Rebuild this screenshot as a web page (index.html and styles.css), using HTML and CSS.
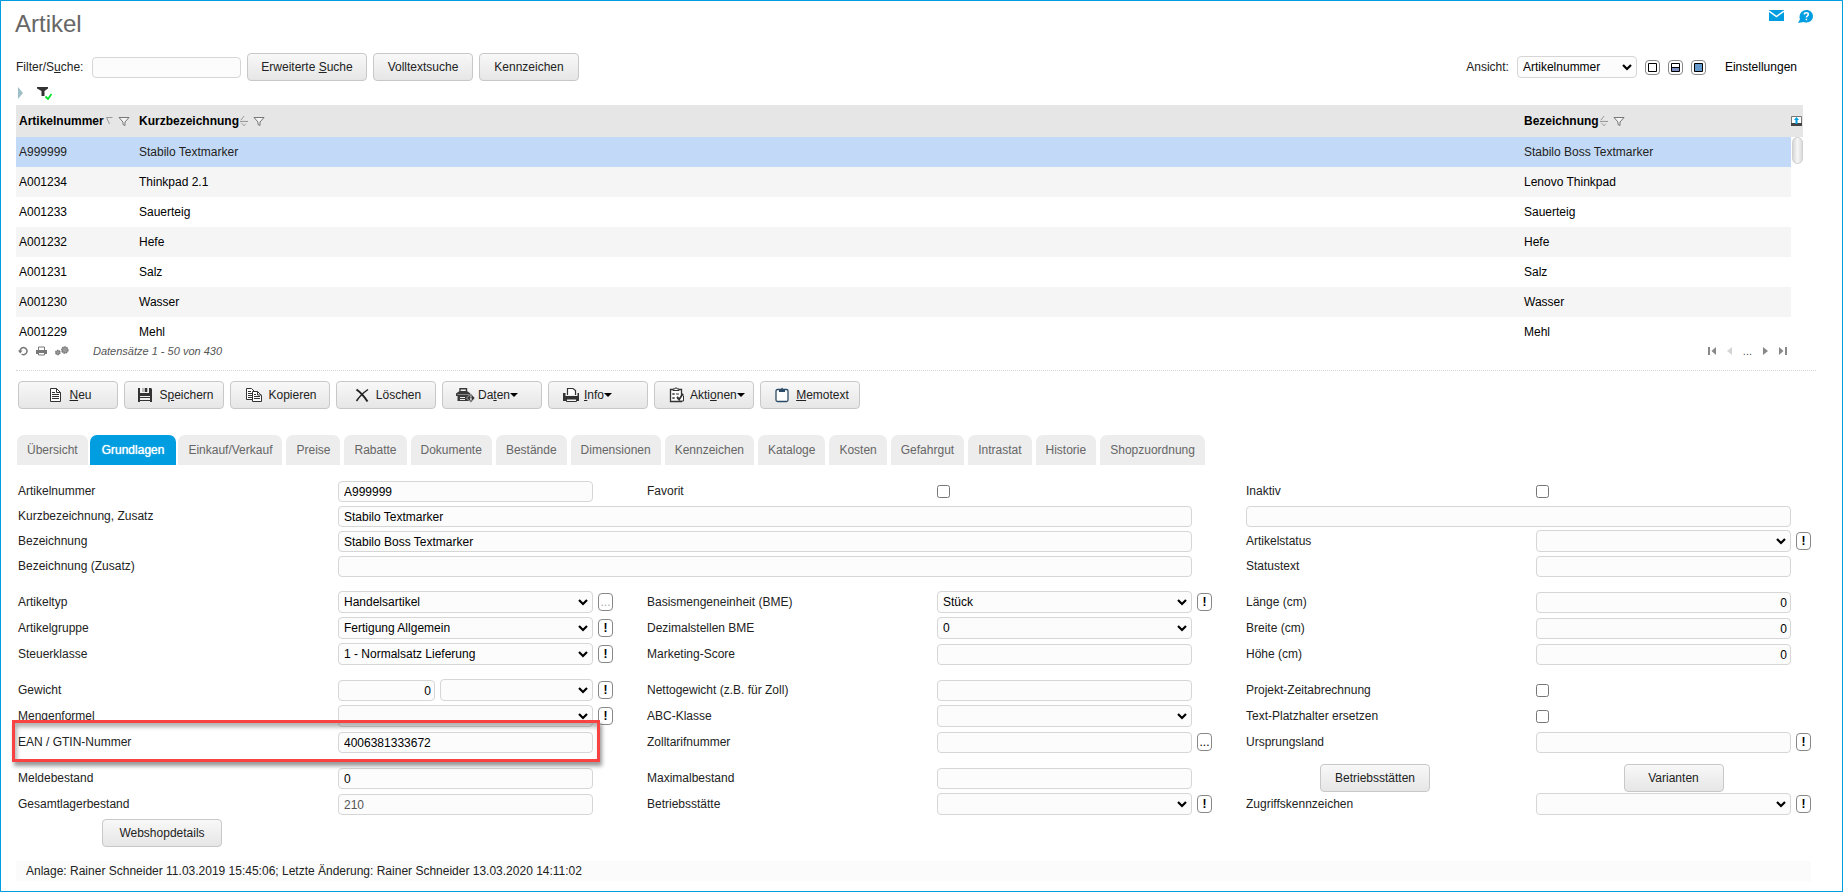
FILE: index.html
```html
<!DOCTYPE html>
<html lang="de">
<head>
<meta charset="utf-8">
<title>Artikel</title>
<link rel="stylesheet" href="styles.css">
</head>
<body>
<svg class="defs" aria-hidden="true">
  <symbol id="funnel" viewBox="0 0 12 11"><path d="M1 1.500h10L7 6v3.500L5 8.500V6z" fill="#f4f4f4" stroke="#777" /></symbol>
  <symbol id="sort" viewBox="0 0 9 12"><path d="M0 6.500h9M1 5l3.500-4.500" stroke="#888" fill="none"/><path d="M1.500 8l3 3.500L6.500 9" stroke="#999" fill="none"/></symbol>
</svg>
<header class="top">
  <h1>Artikel</h1>
  <div class="top-icons">
    <svg width="15" height="11" viewBox="0 0 15 11"><path d="M0 0h15v11H0z" fill="#009ee0"/><path d="M0 1l7.500 5.500L15 1" fill="none" stroke="#fff" stroke-width="1.500"/></svg>
    <svg width="15" height="13" viewBox="0 0 15 13"><path d="M8.500 0C12 0 15 2.700 15 6.300s-3 6.200-6.500 6.200c-1 0-2-.2-2.800-.6L0 13l1.900-3.500C.4 4 4 0 8.500 0z" fill="#009ee0"/><path d="M6.300 4.500c0-2.200 4-2.200 4 0 0 1.400-1.900 1.300-1.900 3M8.400 8.700v1.600" fill="none" stroke="#fff" stroke-width="1.500"/></svg>
  </div>
</header>

<div class="filterbar">
  <label class="search-label" for="suche">Filter/S<u>u</u>che:</label>
  <input id="suche" class="field search" type="text">
  <button class="btn wide"><span>Erweiterte <u>S</u>uche</span></button>
  <button class="btn">Volltextsuche</button>
  <button class="btn">Kennzeichen</button>
  <div class="view">
    <label for="ansicht">Ansicht:</label>
    <select id="ansicht" class="field view-select"><option>Artikelnummer</option></select>
    <div class="view-modes">
      <button class="mode" aria-label="Liste"><svg width="9" height="9"><path d="M.5.500h8v8h-8z" fill="#fff" stroke="#000"/></svg></button>
      <button class="mode" aria-label="Geteilt"><svg width="9" height="9"><path d="M.5.500h8v8h-8z" fill="#fff" stroke="#000"/><path d="M1 5h7v3H1z" fill="#7b8fc0"/><path d="M0 4.500h9" stroke="#000"/></svg></button>
      <button class="mode" aria-label="Detail"><svg width="9" height="9"><path d="M.5.500h8v8h-8z" fill="#6699cc" stroke="#000"/></svg></button>
    </div>
    <a class="settings" href="#">Einstellungen</a>
  </div>
</div>

<div class="filter-state">
  <svg width="5" height="12" viewBox="0 0 5 12"><path d="M0 0l5 6-5 6z" fill="#9fbfc6"/></svg>
  <svg width="15" height="14" viewBox="0 0 15 14"><path d="M0 1h11v1.500L7.500 5v5h-3V5L0 2.500z" fill="#333"/><path d="M8.500 10.500l2.500 2.500 3.500-5" fill="none" stroke="#00e62e" stroke-width="1.800"/></svg>
</div>

<table class="list">
  <colgroup><col class="c-nr"><col><col class="c-bez"><col class="c-bar"></colgroup>
  <thead>
    <tr>
      <th><span class="th">Artikelnummer<svg class="sorted" width="7" height="8" viewBox="0 0 7 8"><path d="M6.500.500h-6L3.500 7" fill="none" stroke="#999"/></svg><svg class="funnel" width="12" height="11"><use href="#funnel"/></svg></span></th>
      <th><span class="th">Kurzbezeichnung<svg width="8" height="12"><use href="#sort"/></svg><svg class="funnel" width="12" height="11"><use href="#funnel"/></svg></span></th>
      <th><span class="th">Bezeichnung<svg width="8" height="12"><use href="#sort"/></svg><svg class="funnel" width="12" height="11"><use href="#funnel"/></svg></span></th>
      <th class="bar"><svg width="11" height="10" viewBox="0 0 11 10"><path d="M.5.500h10v9H.5z" fill="#fff" stroke="#777"/><path d="M0 7h11v3H0z" fill="#444"/><path d="M5.500 1L8 4H6.500v4h-2V4H3z" fill="#009ee0"/></svg></th>
    </tr>
  </thead>
  <tbody>
    <tr class="selected"><td>A999999</td><td>Stabilo Textmarker</td><td>Stabilo Boss Textmarker</td><td class="bar" rowspan="7"><div class="thumb"></div></td></tr>
    <tr><td>A001234</td><td>Thinkpad 2.1</td><td>Lenovo Thinkpad</td></tr>
    <tr><td>A001233</td><td>Sauerteig</td><td>Sauerteig</td></tr>
    <tr><td>A001232</td><td>Hefe</td><td>Hefe</td></tr>
    <tr><td>A001231</td><td>Salz</td><td>Salz</td></tr>
    <tr><td>A001230</td><td>Wasser</td><td>Wasser</td></tr>
    <tr><td>A001229</td><td>Mehl</td><td>Mehl</td></tr>
  </tbody>
</table>

<div class="status">
  <div class="status-icons">
    <svg width="10" height="10" viewBox="0 0 10 10"><path d="M2 5a3.500 3.500 0 1 1 1.500 3" fill="none" stroke="#777" stroke-width="1.500"/><path d="M0 4.500h4.500L2.200 7.500z" fill="#777"/></svg>
    <svg width="11" height="10" viewBox="0 0 11 10"><path d="M2.500 4V1h6v3" fill="#fff" stroke="#777"/><path d="M0 4h11v4H0z" fill="#777"/><path d="M2.500 6.500h6v2.500h-6z" fill="#fff" stroke="#777"/></svg>
    <svg width="14" height="10" viewBox="0 0 14 10"><circle cx="2.800" cy="6.500" r="2.100" fill="#999" stroke="#777" stroke-width="1.500" stroke-dasharray="1.500 .5"/><circle cx="9.800" cy="4" r="3" fill="#999" stroke="#777" stroke-width="1.600" stroke-dasharray="1.600 .6"/></svg>
  </div>
  <span class="count">Datensätze 1 - 50 von 430</span>
  <div class="pager">
    <svg width="8" height="8" viewBox="0 0 8 8"><path d="M0 0h2v8H0zM8 0v8L3.500 4z" fill="#888"/></svg>
    <svg width="5" height="8" viewBox="0 0 5 8"><path d="M5 0v8L0 4z" fill="#d4d4d4"/></svg>
    <span>...</span>
    <svg width="5" height="8" viewBox="0 0 5 8"><path d="M0 0v8l5-4z" fill="#888"/></svg>
    <svg width="8" height="8" viewBox="0 0 8 8"><path d="M6 0h2v8H6zM0 0v8l4.500-4z" fill="#888"/></svg>
  </div>
</div>

<div class="toolbar">
  <button class="btn"><svg width="16" height="16" viewBox="0 0 16 16"><path d="M3.500 1.500h6l4 4v9h-10z" fill="#fff" stroke="#333"/><path d="M9.500 1.500v4h4M5 5.500h3M5 7.500h7M5 9.500h7M5 11.500h7" fill="none" stroke="#333"/></svg><span><u>N</u>eu</span></button>
  <button class="btn"><svg width="16" height="16" viewBox="0 0 16 16"><path d="M1 1h2v5h9V1h2l1 1v13H1z" fill="#333"/><path d="M5 1h6v4H5z" fill="#bbb"/><path d="M8 1h2v4H8z" fill="#333"/><path d="M3 9h10v6H3z" fill="#eee"/><path d="M3 10.500h10M3 13.500h10" stroke="#333"/></svg><span>S<u>p</u>eichern</span></button>
  <button class="btn"><svg width="16" height="16" viewBox="0 0 16 16"><path d="M.5 1.500h5l3 3v8h-8z" fill="#fff" stroke="#333"/><path d="M2 4.500h3M2 6.500h4M2 8.500h4M2 10.500h4" stroke="#333"/><path d="M6.500 4.500h5l4 4v6h-9z" fill="#fff" stroke="#333"/><path d="M11.500 4.500v3.500h4M8 7.500h2M8 9.500h6M8 11.500h6" fill="none" stroke="#333"/></svg><span>Kopieren</span></button>
  <button class="btn"><svg width="16" height="16" viewBox="0 0 16 16"><path d="M2.500 2.500C6 5 10 9 13.500 14.500" fill="none" stroke="#222" stroke-width="2"/><path d="M14 2.500C9 6 5 10 2.500 14" fill="none" stroke="#222" stroke-width="1.500"/></svg><span>Löschen</span></button>
  <button class="btn menu"><svg width="19" height="16" viewBox="0 0 19 16"><path d="M0 6.500L3.500 4h7.500l3.500 2.500V9h-1.500v5H1.500V9H0z" fill="#3a3a3a"/><path d="M4 4V1.700h6.500V4" fill="none" stroke="#3a3a3a" stroke-width="1.400"/><path d="M1.500 7.500h11.500" stroke="#999" stroke-width=".8"/><path d="M4 10.500h5M4 12.500h5" stroke="#e8e8e8"/><path d="M15 6.700l4 4.300-4 4.500-4.500-4.500z" fill="#3a3a3a" stroke="#eee" stroke-width=".6"/><path d="M14.900 8.500v1.200M14.900 10.500v3" stroke="#fff" stroke-width="1.300"/></svg><span>Da<u>t</u>en</span><i class="caret"></i></button>
  <button class="btn menu"><svg width="19" height="16" viewBox="0 0 19 16"><path d="M5.500 8V1.500h5.500l2.500 2V8" fill="#fff" stroke="#333" stroke-width="1.200"/><path d="M1 6h2.500v3h12V6H17v8h-2.500v-2h-10v2H1z" fill="#333"/><path d="M4.500 12h10v2.500h-10z" fill="#f4f4f4" stroke="#333"/></svg><span><u>I</u>nfo</span><i class="caret"></i></button>
  <button class="btn menu"><svg width="19" height="16" viewBox="0 0 19 16"><path d="M2.500 2.500h11v12h-11z" fill="#fff" stroke="#333" stroke-width="1.300"/><path d="M5 3.500V2h1.800l1.200-1.500L9.200 2H11v1.500z" fill="#fff" stroke="#333"/><path d="M4.500 6l2 2M6.500 6l-2 2M8 7h3M4.500 10l2 2M6.500 10l-2 2" fill="none" stroke="#333"/><path d="M15.500 8.500v5.500h-4l-2.500-3" fill="#fff" stroke="#333"/><path d="M9 9.800l2.300 2.400L15 6.800" fill="none" stroke="#333" stroke-width="1.800"/></svg><span>Akti<u>o</u>nen</span><i class="caret"></i></button>
  <button class="btn"><svg width="16" height="16" viewBox="0 0 16 16"><rect x="2" y="2.500" width="12" height="12" rx="1.500" fill="#fff" stroke="#2b4a66" stroke-width="1.300"/><path d="M5 2h2l1-1.500L9 2h2v3H5z" fill="#2b4a66"/></svg><span><u>M</u>emotext</span></button>
</div>

<nav class="tabs">
  <a href="#">Übersicht</a><a href="#" class="active">Grundlagen</a><a href="#">Einkauf/Verkauf</a><a href="#">Preise</a><a href="#">Rabatte</a><a href="#">Dokumente</a><a href="#">Bestände</a><a href="#">Dimensionen</a><a href="#">Kennzeichen</a><a href="#">Kataloge</a><a href="#">Kosten</a><a href="#">Gefahrgut</a><a href="#">Intrastat</a><a href="#">Historie</a><a href="#">Shopzuordnung</a>
</nav>

<form class="form">
  <div class="group tight">
    <label class="l1" for="nr">Artikelnummer</label><input class="field f1" id="nr" value="A999999">
    <label class="l2" for="fav">Favorit</label><input class="f2" type="checkbox" id="fav">
    <label class="l3" for="inaktiv">Inaktiv</label><input class="f3" type="checkbox" id="inaktiv">

    <label class="l1" for="kurz">Kurzbezeichnung, Zusatz</label><input class="field long" id="kurz" value="Stabilo Textmarker">
    <input class="field extra" aria-label="Zusatz">

    <label class="l1" for="bez">Bezeichnung</label><input class="field long" id="bez" value="Stabilo Boss Textmarker">
    <label class="l3" for="status">Artikelstatus</label><select class="field f3" id="status"><option></option></select><button type="button" class="side s3">!</button>

    <label class="l1" for="bez2">Bezeichnung (Zusatz)</label><input class="field long" id="bez2">
    <label class="l3" for="stext">Statustext</label><input class="field f3" id="stext">
  </div>

  <div class="group">
    <label class="l1" for="typ">Artikeltyp</label><select class="field f1" id="typ"><option>Handelsartikel</option></select><button type="button" class="side s1 dots" disabled>...</button>
    <label class="l2" for="bme">Basismengeneinheit (BME)</label><select class="field f2" id="bme"><option>Stück</option></select><button type="button" class="side s2">!</button>
    <label class="l3" for="laenge">Länge (cm)</label><input class="field f3 num" id="laenge" value="0">

    <label class="l1" for="gruppe">Artikelgruppe</label><select class="field f1" id="gruppe"><option>Fertigung Allgemein</option></select><button type="button" class="side s1">!</button>
    <label class="l2" for="dez">Dezimalstellen BME</label><select class="field f2" id="dez"><option>0</option></select>
    <label class="l3" for="breite">Breite (cm)</label><input class="field f3 num" id="breite" value="0">

    <label class="l1" for="steuer">Steuerklasse</label><select class="field f1" id="steuer"><option>1 - Normalsatz Lieferung</option></select><button type="button" class="side s1">!</button>
    <label class="l2" for="score">Marketing-Score</label><input class="field f2" id="score">
    <label class="l3" for="hoehe">Höhe (cm)</label><input class="field f3 num" id="hoehe" value="0">
  </div>

  <div class="group">
    <label class="l1" for="gewicht">Gewicht</label><div class="f1 pair"><input class="field num" id="gewicht" value="0"><select class="field" aria-label="Gewichtseinheit"><option></option></select></div><button type="button" class="side s1">!</button>
    <label class="l2" for="netto">Nettogewicht (z.B. für Zoll)</label><input class="field f2" id="netto">
    <label class="l3" for="zeit">Projekt-Zeitabrechnung</label><input class="f3" type="checkbox" id="zeit">

    <label class="l1" for="formel">Mengenformel</label><select class="field f1" id="formel"><option></option></select><button type="button" class="side s1">!</button>
    <label class="l2" for="abc">ABC-Klasse</label><select class="field f2" id="abc"><option></option></select>
    <label class="l3" for="platz">Text-Platzhalter ersetzen</label><input class="f3" type="checkbox" id="platz">

    <label class="l1 r3" for="ean">EAN / GTIN-Nummer</label><input class="field f1 r3" id="ean" value="4006381333672">
    <div class="mark-cell"><div class="mark"></div></div>
    <label class="l2 r3" for="zoll">Zolltarifnummer</label><input class="field f2 r3" id="zoll"><button type="button" class="side s2 r3 dots">...</button>
    <label class="l3 r3" for="land">Ursprungsland</label><input class="field f3 r3" id="land"><button type="button" class="side s3 r3">!</button>
  </div>

  <div class="group">
    <label class="l1" for="melde">Meldebestand</label><input class="field f1" id="melde" value="0">
    <label class="l2" for="max">Maximalbestand</label><input class="field f2" id="max">
    <div class="l3 center"><button type="button" class="btn mid">Betriebsstätten</button></div>
    <div class="f3 center span"><button type="button" class="btn">Varianten</button></div>

    <label class="l1" for="lager">Gesamtlagerbestand</label><input class="field f1" id="lager" value="210" disabled>
    <label class="l2" for="bs">Betriebsstätte</label><select class="field f2" id="bs"><option></option></select><button type="button" class="side s2">!</button>
    <label class="l3" for="zugriff">Zugriffskennzeichen</label><select class="field f3" id="zugriff"><option></option></select><button type="button" class="side s3">!</button>

    <div class="l1 center"><button type="button" class="btn wide">Webshopdetails</button></div>
  </div>
</form>

<footer class="foot">Anlage: Rainer Schneider 11.03.2019 15:45:06; Letzte Änderung: Rainer Schneider 13.03.2020 14:11:02</footer>
</body>
</html>
```
FILE: styles.css
```css
* { box-sizing: border-box; }

body {
  margin: 0;
  min-height: 100vh;
  border: 1px solid #009ee0;
  background: #fff;
  color: #222;
  font: 12px/14px "Liberation Sans", Arial, sans-serif;
}

button, input, select { font: inherit; color: inherit; margin: 0; }
svg { display: block; flex: none; }
.defs { position: absolute; width: 0; height: 0; }

/* page head */
.top {
  display: flex;
  justify-content: space-between;
  padding: 9px 29px 0 14px;
  height: 52px;
}
h1 { margin: 0; font-size: 24px; font-weight: normal; line-height: 28px; color: #666; }
.top-icons { display: flex; gap: 14px; }

/* shared controls */
.btn {
  display: inline-flex;
  align-items: center;
  justify-content: center;
  flex: none;
  min-width: 100px;
  height: 28px;
  padding: 0 4px;
  border: 1px solid #c8c8c8;
  border-radius: 4px;
  background: linear-gradient(#f8f8f8, #e6e6e6);
  white-space: nowrap;
}
.btn.wide { min-width: 120px; }
.btn.mid { min-width: 110px; }

.field {
  width: 100%;
  min-width: 0;
  height: 21px;
  padding: 0 5px;
  border: 1px solid #d6d6d6;
  border-radius: 4px;
  background-color: #fcfcfc;
  color: #000;
}
select.field {
  height: 22px;
  appearance: none;
  background-image: url("data:image/svg+xml,%3Csvg xmlns='http://www.w3.org/2000/svg' width='10' height='7'%3E%3Cpath d='M1 1l4 4 4-4' fill='none' stroke='%23000' stroke-width='2.2'/%3E%3C/svg%3E");
  background-repeat: no-repeat;
  background-position: right 4px center;
}
.field.num { padding-right: 3px; text-align: right; }
.field:disabled { color: #555; }
input[type="checkbox"] { width: 13px; height: 13px; }

/* filter bar */
.filterbar {
  display: flex;
  align-items: center;
  gap: 6px;
  padding: 0 45px 0 15px;
}
.search-label { width: 70px; }
.field.search { width: 149px; }
.view { display: flex; align-items: center; margin-left: auto; }
.field.view-select { width: 120px; margin: 0 8px; }
.view-modes { display: flex; gap: 8px; }
.mode {
  display: flex;
  align-items: center;
  justify-content: center;
  width: 15px;
  height: 15px;
  padding: 0;
  border: 1px solid #888;
  border-radius: 4px;
  background: #fff;
}
.settings { margin-left: 19px; color: #000; text-decoration: none; }

.filter-state {
  display: flex;
  align-items: center;
  gap: 14px;
  height: 24px;
  padding-left: 17px;
}

/* article list */
.list {
  width: calc(100% - 54px);
  margin-left: 15px;
  border-collapse: collapse;
  table-layout: fixed;
  color: #000;
}
.c-nr { width: 120px; }
.c-bez { width: 270px; }
.c-bar { width: 12px; }
.list th { height: 32px; padding: 0 0 0 3px; background: #e6e6e6; text-align: left; }
.th { display: flex; align-items: center; gap: 1px; }
.th .sorted { margin-left: 1px; }
.th .funnel { margin-left: 4px; }
.list td { height: 30px; padding: 0 0 0 3px; }
.list tbody tr:nth-child(even) td { background: #f5f5f5; }
.list tbody tr.selected td { background: #c2daf7; color: #222; }
.list th.bar { padding: 0; }
.list tbody tr.selected td.bar { padding: 0 0 0 1px; background: #fff; vertical-align: top; }
.thumb {
  width: 11px;
  height: 27px;
  border: 1px solid #d0d0d0;
  border-radius: 6px;
  background: linear-gradient(90deg, #d8d8d8, #f6f6f6, #dcdcdc);
}

.status {
  display: flex;
  align-items: center;
  height: 24px;
  margin: 0 26px 0 15px;
  padding: 0 29px 16px 2px;
  border-bottom: 1px dotted #d4d4d4;
  color: #555;
  font-size: 11px;
}
.status-icons { display: flex; gap: 8px; width: 75px; }
.count { font-style: italic; }
.pager { display: flex; align-items: center; gap: 11px; margin-left: auto; }

/* actions */
.toolbar { display: flex; gap: 6px; padding: 10px 17px 0; }
.toolbar .btn { gap: 6px; padding: 0 2px 0 5px; }
.toolbar .btn.menu { justify-content: flex-start; gap: 3px; padding-left: 13px; }
.caret { border: 4px solid transparent; border-top-color: #000; border-bottom: 0; margin-left: -3px; }

.tabs { display: flex; gap: 4px; padding: 26px 16px 0; }
.tabs a {
  padding: 8px 10px;
  border-radius: 7px 7px 0 0;
  background: #ededed;
  color: #666;
  text-decoration: none;
  white-space: nowrap;
}
.tabs .active {
  margin: 0 -2px;
  padding: 8px 12px;
  background: #009ee0;
  color: #fff;
  text-shadow: 0 0 1px #fff;
}

/* detail form */
.form { display: flex; flex-direction: column; gap: 14px; padding: 15px 31px 0 17px; }
.group {
  display: grid;
  grid-template-columns: 320fr 255fr 54fr 290fr 255fr 54fr 290fr 255fr 20px;
  grid-auto-rows: 22px;
  row-gap: 4px;
  align-items: end;
}
.group.tight { row-gap: 3px; }
.group label { align-self: center; white-space: nowrap; }
.group input[type="checkbox"] { align-self: center; }
.l1 { grid-column: 1; }
.f1 { grid-column: 2; }
.s1 { grid-column: 3; }
.l2 { grid-column: 4; }
.f2 { grid-column: 5; }
.s2 { grid-column: 6; }
.l3 { grid-column: 7; }
.f3 { grid-column: 8; }
.s3 { grid-column: 9; }
.r3 { grid-row: 3; }
.long { grid-column: 2 / 6; }
.extra { grid-column: 7 / 9; }
.pair { display: grid; grid-template-columns: 97fr 153fr; gap: 5px; align-items: end; }
.side {
  align-self: center;
  width: 15px;
  height: 18px;
  margin-left: 5px;
  padding: 0;
  border: 1px solid #888;
  border-radius: 4px;
  background: #fff;
  color: #000;
  font-weight: bold;
}
.side.dots { font-weight: normal; }
.side:disabled { color: #aaa; }
.center { display: flex; align-items: center; justify-content: center; align-self: center; height: 22px; }
.l1.center, .l3.center { padding-right: 32px; }
.center.span { grid-column: 8 / 10; }
.l1.center { height: 28px; align-self: start; }

/* highlight frame laid over the EAN row */
.mark-cell { position: relative; grid-area: 3 / 1 / 4 / 3; height: 22px; pointer-events: none; }
.mark {
  position: absolute;
  inset: -11px -7px -9px -6px;
  border: 3px solid #f94343;
  box-shadow: 2px 4px 4px rgba(0, 0, 0, .4), inset 2px 4px 4px rgba(0, 0, 0, .3);
}

.foot {
  margin: 20px 31px 0 15px;
  padding: 3px 10px;
  background: #fbfbfb;
}
```
